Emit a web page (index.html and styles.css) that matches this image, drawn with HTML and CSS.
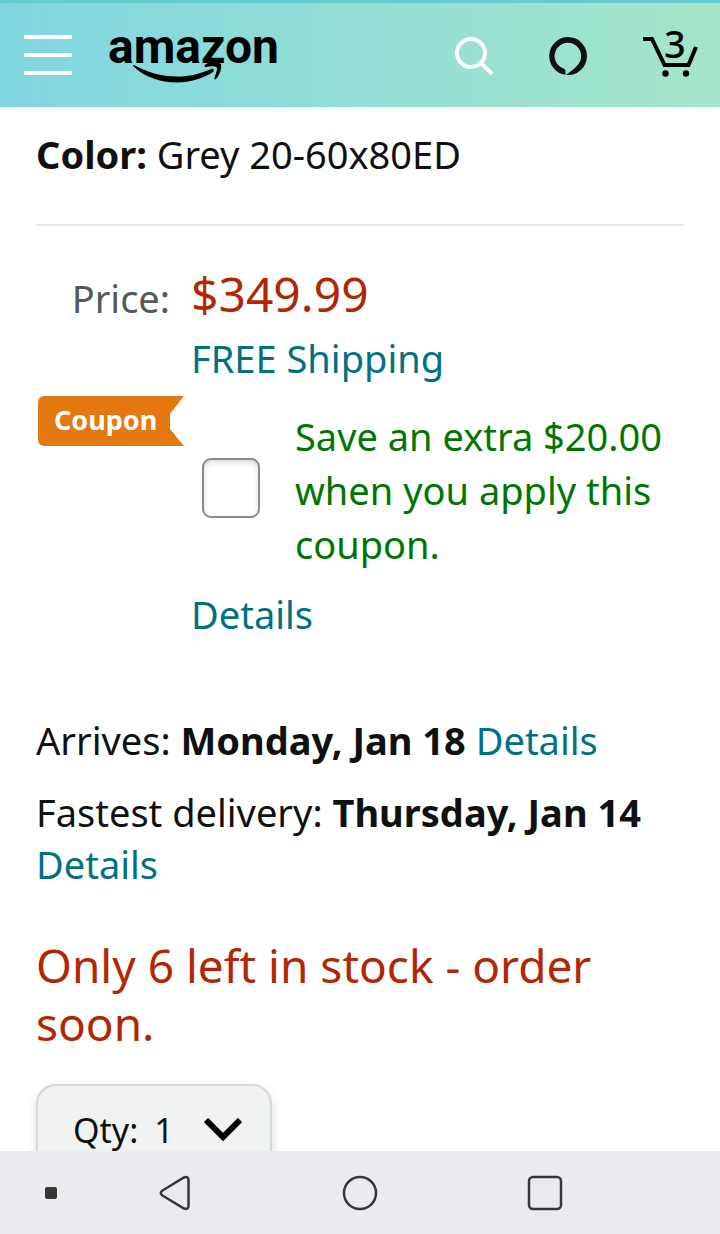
FILE: index.html
```html
<!DOCTYPE html>
<html lang="en">

<head>
    <meta charset="UTF-8">
    <meta name="viewport" content="width=device-width, initial-scale=1.0">
    <title>Amazon</title>
    <link rel="stylesheet" href="styles.css">
</head>

<body>
    <header class="top-bar">
        <button type="button" class="icon-button" aria-label="Menu">
            <svg width="48" height="40" viewBox="0 0 48 40" fill="#fff">
                <path d="M0 0h48v4H0zM0 18h48v4H0zM0 36h48v4H0z" />
            </svg>
        </button>
        <a href="#" class="logo">
            <span class="logo-text">amazon</span>
            <svg class="logo-smile" width="90" height="21" viewBox="0 0 90 21">
                <path d="M1 3C0 3 0 4 1 5C12 15 27 20.500 44 20.500C57 20.500 71 16 80 10C82 8 80 6 78 7C67 12 56 14.500 44 14.500C28 14.500 14 10 1 3Z" />
                <path d="M72 3C75 0 84 0 88 2C89 7 86 14 83 17C82 18 81 17 81.500 16C83 11 84.500 7 84 5.500C82 4 77 4 73 5C71 5 71 4 72 3Z" />
            </svg>
        </a>
        <div class="top-actions">
            <button type="button" class="icon-button" aria-label="Search">
                <svg width="40" height="40" viewBox="0 0 40 40" fill="none" stroke="#fff" stroke-width="4">
                    <circle cx="17" cy="18" r="14" />
                    <path d="M27 28l11 11" />
                </svg>
            </button>
            <button type="button" class="icon-button" aria-label="Alexa">
                <svg width="38" height="40" viewBox="0 0 38 40" fill="#111">
                    <path d="M19 2A19 19 0 0 0 16.500 39.800V36.500C16.500 35 15.800 34.200 14.500 33.600A13.300 13.300 0 1 1 28 30.700C25 34 21 37 17 39.900A19 19 0 1 0 19 2Z" />
                </svg>
            </button>
            <a href="#" class="cart" aria-label="Cart">
                <svg width="56" height="50" viewBox="0 0 56 50">
                    <path d="M1 9H10L22.500 35H46.500L54 17" fill="none" stroke="#000" stroke-width="4" />
                    <circle cx="23.500" cy="43.500" r="3.200" />
                    <circle cx="44" cy="43.500" r="3.200" />
                </svg>
                <span class="cart-count">3</span>
            </a>
        </div>
    </header>

    <main class="product">
        <p class="color-row"><strong>Color:</strong> Grey 20-60x80ED</p>

        <div class="price-grid">
            <span class="price-label">Price:</span>
            <span class="price">$349.99</span>
            <a href="#" class="shipping">FREE Shipping</a>
            <span class="coupon-badge">Coupon</span>
            <div class="coupon">
                <label class="coupon-label">
                    <input type="checkbox" class="coupon-check">
                    <span>Save an extra $20.00 when you apply this coupon.</span>
                </label>
                <a href="#">Details</a>
            </div>
        </div>

        <p class="delivery">Arrives: <strong>Monday, Jan 18</strong> <a href="#">Details</a></p>
        <p class="delivery">Fastest delivery: <strong>Thursday, Jan 14</strong> <a href="#">Details</a></p>

        <p class="stock">Only 6 left in stock - order soon.</p>

        <div class="quantity">
            <label for="qty">Qty:</label>
            <select id="qty">
                <option>1</option>
                <option>2</option>
                <option>3</option>
            </select>
            <svg width="38" height="24" viewBox="0 0 38 24" fill="none" stroke="#000" stroke-width="6">
                <path d="M2 2L19 19L36 2" />
            </svg>
        </div>
    </main>

    <nav class="system-bar">
        <span class="dot"></span>
        <button type="button" class="icon-button" aria-label="Back">
            <svg width="32" height="36" viewBox="0 0 32 36" fill="none" stroke="#373737" stroke-width="2.500">
                <path d="M3.500 15.500L25 2.500Q29.500 1 29.500 5V31Q29.500 35 25 33.500L3.500 20.500Q0 18 3.500 15.500Z" />
            </svg>
        </button>
        <button type="button" class="icon-button" aria-label="Home">
            <svg width="36" height="36" viewBox="0 0 36 36" fill="none" stroke="#373737" stroke-width="2.500">
                <circle cx="18" cy="18" r="16" />
            </svg>
        </button>
        <button type="button" class="icon-button" aria-label="Recent apps">
            <svg width="36" height="36" viewBox="0 0 36 36" fill="none" stroke="#373737" stroke-width="2.500">
                <rect x="2" y="2" width="32" height="32" rx="4" />
            </svg>
        </button>
    </nav>
</body>

</html>
```
FILE: styles.css
```css
* {
    box-sizing: border-box;
}

body {
    display: flex;
    flex-direction: column;
    height: 100vh;
    margin: 0;
    font-family: "Noto Sans", sans-serif;
    font-size: 38px;
    line-height: 52px;
    color: #0f1111;
    background-color: #fff;
}

p {
    margin: 0;
}

a {
    color: #007185;
    text-decoration: none;
}

svg {
    display: block;
}

.icon-button {
    padding: 0;
    border: none;
    background: none;
    cursor: pointer;
}

/* Header */
.top-bar {
    display: flex;
    flex-shrink: 0;
    align-items: center;
    height: 107px;
    padding: 0 22px 0 24px;
    border-top: 3px solid #65cdcf;
    background: linear-gradient(90deg, #80d6e1, #a5e6ca);
}

.logo {
    position: relative;
    margin-left: 36px;
    padding-bottom: 16px;
    color: #000;
}

.logo-text {
    display: block;
    font-family: Roboto, sans-serif;
    font-size: 48px;
    font-weight: bold;
}

.logo-smile {
    position: absolute;
    left: 25px;
    bottom: 6px;
}

.top-actions {
    display: flex;
    align-items: center;
    gap: 55px;
    margin-left: auto;
}

.cart {
    position: relative;
    color: #000;
}

.cart-count {
    position: absolute;
    top: -13px;
    left: 22px;
    font-size: 38px;
    font-weight: 500;
}

/* Product */
.product {
    flex: 1;
    min-height: 0;
    padding: 21px 36px 0;
    overflow: hidden;
}

.color-row {
    padding-bottom: 44px;
    border-bottom: 2px solid #e7e7e7;
}

.price-grid {
    display: grid;
    grid-template-columns: 148px 1fr;
    column-gap: 7px;
    align-items: start;
    margin: 38px 0 74px;
}

.price-label {
    padding-right: 14px;
    line-height: 68px;
    text-align: right;
    color: #565959;
}

.price {
    font-size: 48px;
    line-height: 60px;
    color: #b12704;
}

.shipping {
    grid-column: 2;
}

.coupon-badge {
    height: 50px;
    margin: 12px 0 0 2px;
    padding-left: 16px;
    border-radius: 6px 0 0 6px;
    font-size: 27px;
    font-weight: bold;
    line-height: 48px;
    color: #fff;
    background-color: #e47911;
    clip-path: polygon(0 0, 100% 0, 132px 18px, 132px 33px, 100% 100%, 0 100%);
}

.coupon {
    padding-top: 25px;
}

.coupon-label {
    display: flex;
    align-items: center;
    gap: 35px;
    margin-bottom: 17px;
    padding-left: 11px;
    line-height: 54px;
    color: #007600;
}

.coupon-check {
    flex-shrink: 0;
    width: 58px;
    height: 60px;
    margin: 0 0 4px;
    border: 2px solid #888c8c;
    border-radius: 9px;
    background-color: #fff;
    box-shadow: inset 0 3px 5px rgba(15, 17, 17, 0.15);
    appearance: none;
}

.coupon-check:checked {
    background-color: #007185;
}

.delivery {
    margin-bottom: 20px;
}

.stock {
    margin: 46px 0 32px;
    font-size: 46px;
    line-height: 58px;
    color: #b12704;
}

.quantity {
    display: inline-flex;
    align-items: center;
    height: 92px;
    padding: 0 28px 0 35px;
    border: 2px solid #d5d9d9;
    border-radius: 20px;
    font-size: 34px;
    background-color: #f0f2f2;
    box-shadow: 0 4px 10px rgba(15, 17, 17, 0.15);
}

.quantity select {
    width: 50px;
    margin: 0 0 0 16px;
    padding: 0;
    border: none;
    font: inherit;
    color: inherit;
    background: none;
    appearance: none;
}

/* System navigation */
.system-bar {
    display: grid;
    flex-shrink: 0;
    grid-template-columns: 83px 1fr 1fr 1fr 83px;
    align-items: center;
    justify-items: center;
    height: 83px;
    background-color: #e9ebee;
}

.dot {
    justify-self: end;
    width: 12px;
    height: 12px;
    margin-right: 26px;
    border-radius: 2px;
    background-color: #373737;
}
```
